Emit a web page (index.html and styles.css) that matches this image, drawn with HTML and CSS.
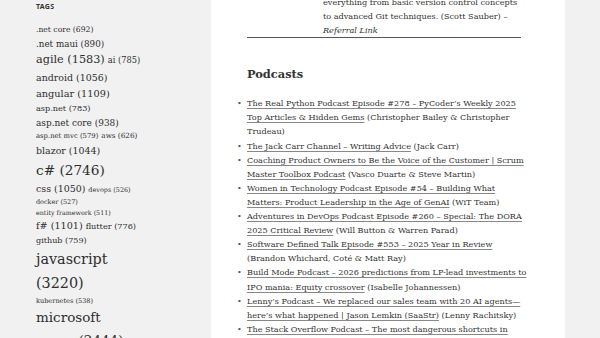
FILE: index.html
```html
<!DOCTYPE html>
<html lang="en">
<head>
    <meta charset="UTF-8">
    <meta name="viewport" content="width=device-width, initial-scale=1.0">
    <title>Podcasts</title>
    <link rel="stylesheet" href="styles.css">
</head>
<body>
    <div class="page">
        <aside class="sidebar">
            <section class="widget">
                <h2 class="widget-title">Tags</h2>
                <div class="tagcloud">
                    <a href="#" style="font-size: 7.65px">.net core (692)</a>
                    <a href="#" style="font-size: 8.75px">.net maui (890)</a>
                    <a href="#" style="font-size: 11.25px">agile (1583)</a>
                    <a href="#" style="font-size: 8.25px">ai (785)</a>
                    <a href="#" style="font-size: 9.45px">android (1056)</a>
                    <a href="#" style="font-size: 9.75px">angular (1109)</a>
                    <a href="#" style="font-size: 8.15px">asp.net (783)</a>
                    <a href="#" style="font-size: 8.95px">asp.net core (938)</a>
                    <a href="#" style="font-size: 6.85px">asp.net mvc (579)</a>
                    <a href="#" style="font-size: 7.25px">aws (626)</a>
                    <a href="#" style="font-size: 9.45px">blazor (1044)</a>
                    <a href="#" style="font-size: 13.65px">c# (2746)</a>
                    <a href="#" style="font-size: 9.45px">css (1050)</a>
                    <a href="#" style="font-size: 6.45px">devops (526)</a>
                    <a href="#" style="font-size: 6.45px">docker (527)</a>
                    <a href="#" style="font-size: 6.35px">entity framework (511)</a>
                    <a href="#" style="font-size: 9.65px">f# (1101)</a>
                    <a href="#" style="font-size: 8.15px">flutter (776)</a>
                    <a href="#" style="font-size: 8.05px">github (759)</a>
                    <a href="#" style="font-size: 14.35px">javascript (3220)</a>
                    <a href="#" style="font-size: 6.55px">kubernetes (538)</a>
                    <a href="#" style="font-size: 13.5px">microsoft azure (2444)</a>
                </div>
            </section>
        </aside>

        <main class="content">
            <div class="book">
                <p>everything from basic version control concepts to advanced Git techniques. (Scott Sauber) – <em>Referral Link</em></p>
            </div>

            <h2 class="section-title">Podcasts</h2>
            <ul class="podcasts">
                <li><a href="#">The Real Python Podcast Episode #278 – PyCoder’s Weekly 2025 Top Articles &amp; Hidden Gems</a> (Christopher Bailey &amp; Christopher Trudeau)</li>
                <li><a href="#">The Jack Carr Channel – Writing Advice</a> (Jack Carr)</li>
                <li><a href="#">Coaching Product Owners to Be the Voice of the Customer | Scrum Master Toolbox Podcast</a> (Vasco Duarte &amp; Steve Martin)</li>
                <li><a href="#">Women in Technology Podcast Episode #54 – Building What Matters: Product Leadership in the Age of GenAI</a> (WiT Team)</li>
                <li><a href="#">Adventures in DevOps Podcast Episode #260 – Special: The DORA 2025 Critical Review</a> (Will Button &amp; Warren Parad)</li>
                <li><a href="#">Software Defined Talk Episode #553 – 2025 Year in Review</a> (Brandon Whichard, Coté &amp; Matt Ray)</li>
                <li><a href="#">Build Mode Podcast – 2026 predictions from LP-lead investments to IPO mania: Equity crossover</a> (Isabelle Johannessen)</li>
                <li><a href="#">Lenny’s Podcast – We replaced our sales team with 20 AI agents—here’s what happened | Jason Lemkin (SaaStr)</a> (Lenny Rachitsky)</li>
                <li><a href="#">The Stack Overflow Podcast – The most dangerous shortcuts in software</a> (Ryan Donovan)</li>
            </ul>
        </main>
    </div>
</body>
</html>
```

FILE: styles.css
```css
body {
    margin: 0;
    background-color: #f1f1f1;
    color: #333;
    font-family: "DejaVu Serif", serif;
}
.page {
    display: flex;
    align-items: flex-start;
}
.sidebar {
    width: 211px;
    flex-shrink: 0;
    padding: 2px 0 0 36px;
    box-sizing: border-box;
}
.widget-title {
    margin: 0 0 12px;
    font-family: "Noto Sans", sans-serif;
    font-size: 7px;
    font-weight: 700;
    line-height: 10px;
    letter-spacing: 0.04em;
    text-transform: uppercase;
}
.tagcloud {
    display: flex;
    flex-wrap: wrap;
    align-items: baseline;
    column-gap: 3px;
    width: 105px;
}
.tagcloud a {
    color: #2e2e2e;
    text-decoration: none;
    line-height: 1.665;
}
.content {
    width: 354px;
    flex-shrink: 0;
    min-height: 360px;
    padding: 0 36px 0 36px;
    box-sizing: border-box;
    background-color: #fff;
    font-size: 8.15px;
    line-height: 14.1px;
}
.book {
    width: 274px;
    margin-top: -5px;
    padding-left: 76px;
    box-sizing: border-box;
    border-bottom: 1px solid #555;
}
.book p {
    margin: 0 -3px 0 0;
}
.section-title {
    margin: 28px 0 13px;
    font-size: 11.4px;
    font-weight: 700;
    line-height: 17px;
}
.podcasts {
    margin: 0;
    padding: 0;
    list-style: disc outside;
}
.podcasts li::marker {
    content: "•\00a0\00a0";
    color: #555;
}
.podcasts a {
    color: #333;
    text-decoration: underline;
    text-decoration-color: #888;
    text-underline-offset: 2px;
}
```
